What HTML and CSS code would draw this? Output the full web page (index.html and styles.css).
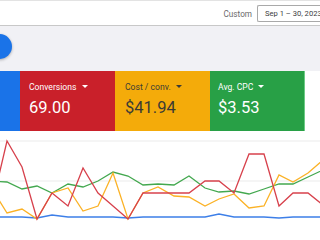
FILE: index.html
```html
<!DOCTYPE html>
<html>
<head>
<meta charset=utf-8>
<title>Campaign overview</title>
<link rel="stylesheet" href="styles.css">
</head>
<body>
<div class="topbar">
  <span class="range-label">Custom</span>
  <div class="range">Sep 1 &ndash; 30, 2023</div>
</div>

<div class="toolrow">
  <div class="fab"></div>
</div>

<div class="cards">
  <div class="card blue"></div>
  <div class="card red">
    <div class="metric">Conversions <span class="caret"></span></div>
    <div class="value">69.00</div>
  </div>
  <div class="card yellow">
    <div class="metric">Cost / conv. <span class="caret"></span></div>
    <div class="value">$41.94</div>
  </div>
  <div class="card green">
    <div class="metric">Avg. CPC <span class="caret"></span></div>
    <div class="value">$3.53</div>
  </div>
</div>

<div class="chart">
<svg width="320" height="109" viewBox="0 0 320 109">
  <g class="grid">
    <line x1="0" y1="10" x2="320" y2="10"/>
    <line x1="0" y1="50" x2="320" y2="50"/>
  </g>
  <polyline class="l-blue" points="-8,86 7,86 22,86 37,87 52,84 68,86 83,86 98,86 113,86 128,87 143,86 158,86 174,86 189,86 205,86 219,83 234,86 249,86 264,86 279,87 293,86 308,86 323,86"/>
  <polyline class="l-green" points="-8,50 7,51 22,58 37,55 52,62 68,53 83,56 98,50 113,41 128,45 143,54 158,53 174,54 189,45 205,57 219,61 234,60 249,63 264,58 279,53 293,53 308,46 323,39"/>
  <polyline class="l-yellow" points="-8,58 7,82 22,78 37,88 52,62 68,57 83,80 98,75 113,42 128,88 143,62 158,56 174,65 189,66 205,75 219,68 234,63 249,77 264,75 279,44 293,51 308,42 323,29"/>
  <polyline class="l-red" points="-8,74 7,10 22,36 37,88 52,62 68,75 83,37 98,62 113,75 128,88 143,62 158,62 174,62 189,62 205,50 219,50 234,62 249,23 264,23 279,75 293,62 308,62 323,74"/>
</svg>
</div>
</body>
</html>
```
FILE: styles.css
```css
html, body
{
	margin:0;
	padding:0;
	width:320px;
	height:240px;
	overflow:hidden;
	background-color:#fff;
	font-family:Roboto, "Liberation Sans", Arial, sans-serif;
}
.topbar
{
	height:26px;
	box-sizing:border-box;
	border-top:1px solid #e3e3e3;
	border-bottom:1px solid #c8c8c8;
	display:flex;
	align-items:center;
	justify-content:flex-end;
	padding-top:1px;
	background-color:#fff;
}
.range-label
{
	font-size:8.2px;
	color:#6b6b6b;
	margin-right:5px;
}
.range
{
	width:63px;
	height:17px;
	box-sizing:border-box;
	border:1px solid #a9a9a9;
	border-right:none;
	border-radius:2px 0 0 2px;
	font-size:7.6px;
	color:#3c4043;
	padding-left:7px;
	line-height:15px;
	white-space:nowrap;
	overflow:hidden;
}
.toolrow
{
	height:45px;
	background-color:#f1f1f5;
	position:relative;
}
.fab
{
	position:absolute;
	left:-13px;
	top:8px;
	width:25px;
	height:25px;
	border-radius:50%;
	background-color:#1a73e8;
	box-shadow:0 1px 3px rgba(0,0,0,.3);
}
.cards
{
	display:flex;
	height:60px;
	background-color:#fff;
}
.card
{
	width:95px;
	box-sizing:border-box;
	padding:10px 0 0 9px;
	color:#fff;
}
.card.blue { width:20px; background-color:#1a73e8; padding:0; }
.card.red { background-color:#c9202a; }
.card.yellow { background-color:#f4ab0a; color:#3b3b35; padding-left:10px; }
.card.green { background-color:#28a046; padding-left:8px; border-right:1px solid #6ccb85; }
.metric
{
	font-size:8.6px;
	height:12px;
	line-height:12px;
	white-space:nowrap;
}
.caret
{
	display:inline-block;
	width:0;
	height:0;
	margin-left:3px;
	vertical-align:2px;
	border-left:3px solid transparent;
	border-right:3px solid transparent;
	border-top:3px solid currentColor;
}
.value
{
	font-size:16.5px;
	margin-top:6px;
	line-height:18px;
}
.chart
{
	height:109px;
	background-color:#fff;
}
.chart svg { display:block; }
.grid line { stroke:#ebebeb; stroke-width:1; }
polyline { fill:none; stroke-width:1.3; stroke-linejoin:miter; }
.l-blue { stroke:#3d7fe8; }
.l-green { stroke:#43a84f; }
.l-yellow { stroke:#fbb226; }
.l-red { stroke:#d7414c; }
```
